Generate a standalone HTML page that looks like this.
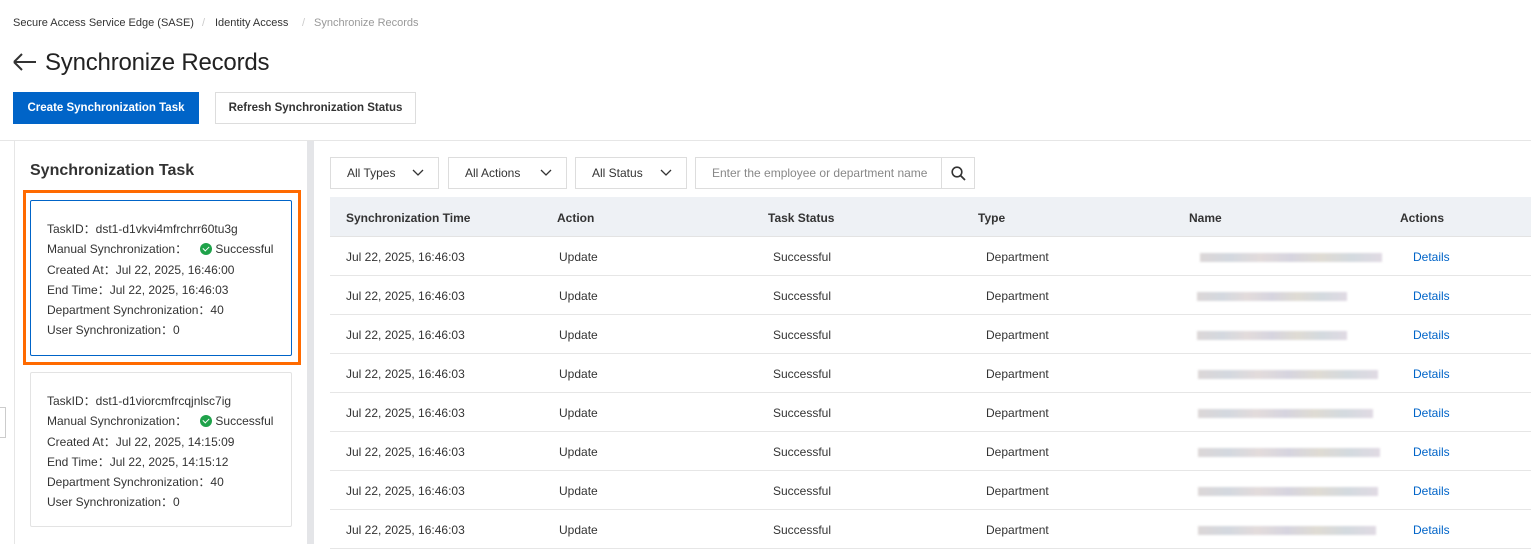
<!DOCTYPE html>
<html><head><meta charset="utf-8"><style>
*{box-sizing:border-box;margin:0;padding:0}
body{width:1531px;height:544px;overflow:hidden;background:#fff;font-family:"Liberation Sans",sans-serif;color:#333;position:relative;font-size:12px}
.a{position:absolute;white-space:nowrap}
.bc{top:17px;font-size:11px;color:#333}
.btn{height:32px;line-height:30px;font-size:11.5px;font-weight:bold;text-align:center;border:1px solid #ddd}
.sel{height:32px;border:1px solid #ddd;top:157px;line-height:31px;padding-left:16px;font-size:12px;color:#333}
.sel svg{position:absolute;right:14px;top:11px}
.card{border:1px solid #e3e3e3;border-radius:2px;left:30px;width:262px;padding:18px 0 0 16px;font-size:12px;line-height:20.3px;color:#333}
.ok{display:inline-block;width:12px;height:12px;border-radius:50%;background:#1fa24a;vertical-align:-2px;margin:0 3px 0 10px;position:relative}
.ok:after{content:"";position:absolute;left:3.5px;top:2px;width:3px;height:5px;border:solid #fff;border-width:0 1.6px 1.6px 0;transform:rotate(45deg)}
.row{position:absolute;left:330px;width:1201px;height:39px;border-bottom:1px solid #e6e6e6;line-height:41px}
.row span{position:absolute}
.blur{position:absolute;height:9px;top:16px;background:linear-gradient(90deg,#d8d3d3,#cfd4dc,#e0d8d8,#d2d0dc,#dcd8cf,#cfd6dc,#ddd6e0);filter:blur(1px);opacity:.9}
.det{color:#0064c8}
</style></head><body>
<div class="a bc" style="left:13px">Secure Access Service Edge (SASE)</div>
<div class="a bc" style="left:202px;color:#ccc">/</div>
<div class="a bc" style="left:215px">Identity Access</div>
<div class="a bc" style="left:302px;color:#ccc">/</div>
<div class="a bc" style="left:314px;color:#999">Synchronize Records</div>
<svg class="a" style="left:13px;top:53px" width="24" height="18" viewBox="0 0 24 18"><path d="M1 9H23M1 9L9 1M1 9L9 17" stroke="#333" stroke-width="2" fill="none"/></svg>
<div class="a" style="left:45px;top:49px;font-size:24px;color:#222;letter-spacing:-0.2px">Synchronize Records</div>
<div class="a btn" style="left:13px;top:92px;width:186px;background:#0064c8;color:#fff;border-color:#0064c8">Create Synchronization Task</div>
<div class="a btn" style="left:215px;top:92px;width:201px;background:#fff;color:#333">Refresh Synchronization Status</div>

<div class="a" style="left:0;top:140px;width:1531px;height:1px;background:#e6e6e6"></div>
<div class="a" style="left:14px;top:141px;width:1px;height:403px;background:#e6e6e6"></div>
<div class="a" style="left:307px;top:141px;width:7px;height:403px;background:#e4e5e8"></div>
<div class="a" style="left:0;top:407px;width:6px;height:31px;border:1px solid #ccc;border-left:none;background:#fff"></div>

<div class="a" style="left:30px;top:162px;font-size:16px;font-weight:bold;color:#333">Synchronization Task</div>
<div class="a" style="left:23px;top:190px;width:278px;height:175px;border:3px solid #ff6a00"></div>
<div class="a card" style="top:200px;height:156px;border-color:#0064c8">TaskID：dst1-d1vkvi4mfrchrr60tu3g<br>Manual Synchronization： <span class="ok"></span>Successful<br>Created At：Jul 22, 2025, 16:46:00<br>End Time：Jul 22, 2025, 16:46:03<br>Department Synchronization：40<br>User Synchronization：0</div>
<div class="a card" style="top:372px;height:155px">TaskID：dst1-d1viorcmfrcqjnlsc7ig<br>Manual Synchronization： <span class="ok"></span>Successful<br>Created At：Jul 22, 2025, 14:15:09<br>End Time：Jul 22, 2025, 14:15:12<br>Department Synchronization：40<br>User Synchronization：0</div>

<div class="a sel" style="left:330px;width:109px">All Types<svg width="12" height="8"><path d="M1 1L6 6L11 1" stroke="#333" stroke-width="1.3" fill="none"/></svg></div>
<div class="a sel" style="left:448px;width:119px">All Actions<svg width="12" height="8"><path d="M1 1L6 6L11 1" stroke="#333" stroke-width="1.3" fill="none"/></svg></div>
<div class="a sel" style="left:575px;width:112px">All Status<svg width="12" height="8"><path d="M1 1L6 6L11 1" stroke="#333" stroke-width="1.3" fill="none"/></svg></div>
<div class="a sel" style="left:695px;width:280px;color:#888;overflow:hidden">Enter the employee or department name</div>
<div class="a" style="left:941px;top:157px;width:34px;height:32px;border:1px solid #ddd;background:#fff"><svg style="position:absolute;left:9px;top:8px" width="15" height="15"><circle cx="6" cy="6" r="4.8" stroke="#333" stroke-width="1.6" fill="none"/><path d="M9.5 9.5L14 14" stroke="#333" stroke-width="1.8"/></svg></div>

<div class="a" style="left:330px;top:197px;width:1201px;height:40px;background:#eef1f5;border-bottom:1px solid #e3e3e3;font-weight:bold;color:#333;line-height:42px">
<span class="a" style="left:16px">Synchronization Time</span><span class="a" style="left:227px">Action</span><span class="a" style="left:438px">Task Status</span><span class="a" style="left:648px">Type</span><span class="a" style="left:859px">Name</span><span class="a" style="left:1070px">Actions</span></div>

<div class="row" style="top:237px"><span style="left:16px">Jul 22, 2025, 16:46:03</span><span style="left:229px">Update</span><span style="left:443px">Successful</span><span style="left:656px">Department</span><div class="blur" style="left:870px;width:182px"></div><span class="det" style="left:1083px">Details</span></div>
<div class="row" style="top:276px"><span style="left:16px">Jul 22, 2025, 16:46:03</span><span style="left:229px">Update</span><span style="left:443px">Successful</span><span style="left:656px">Department</span><div class="blur" style="left:867px;width:150px"></div><span class="det" style="left:1083px">Details</span></div>
<div class="row" style="top:315px"><span style="left:16px">Jul 22, 2025, 16:46:03</span><span style="left:229px">Update</span><span style="left:443px">Successful</span><span style="left:656px">Department</span><div class="blur" style="left:867px;width:150px"></div><span class="det" style="left:1083px">Details</span></div>
<div class="row" style="top:354px"><span style="left:16px">Jul 22, 2025, 16:46:03</span><span style="left:229px">Update</span><span style="left:443px">Successful</span><span style="left:656px">Department</span><div class="blur" style="left:868px;width:180px"></div><span class="det" style="left:1083px">Details</span></div>
<div class="row" style="top:393px"><span style="left:16px">Jul 22, 2025, 16:46:03</span><span style="left:229px">Update</span><span style="left:443px">Successful</span><span style="left:656px">Department</span><div class="blur" style="left:868px;width:175px"></div><span class="det" style="left:1083px">Details</span></div>
<div class="row" style="top:432px"><span style="left:16px">Jul 22, 2025, 16:46:03</span><span style="left:229px">Update</span><span style="left:443px">Successful</span><span style="left:656px">Department</span><div class="blur" style="left:868px;width:182px"></div><span class="det" style="left:1083px">Details</span></div>
<div class="row" style="top:471px"><span style="left:16px">Jul 22, 2025, 16:46:03</span><span style="left:229px">Update</span><span style="left:443px">Successful</span><span style="left:656px">Department</span><div class="blur" style="left:868px;width:180px"></div><span class="det" style="left:1083px">Details</span></div>
<div class="row" style="top:510px"><span style="left:16px">Jul 22, 2025, 16:46:03</span><span style="left:229px">Update</span><span style="left:443px">Successful</span><span style="left:656px">Department</span><div class="blur" style="left:868px;width:178px"></div><span class="det" style="left:1083px">Details</span></div>
</body></html>
